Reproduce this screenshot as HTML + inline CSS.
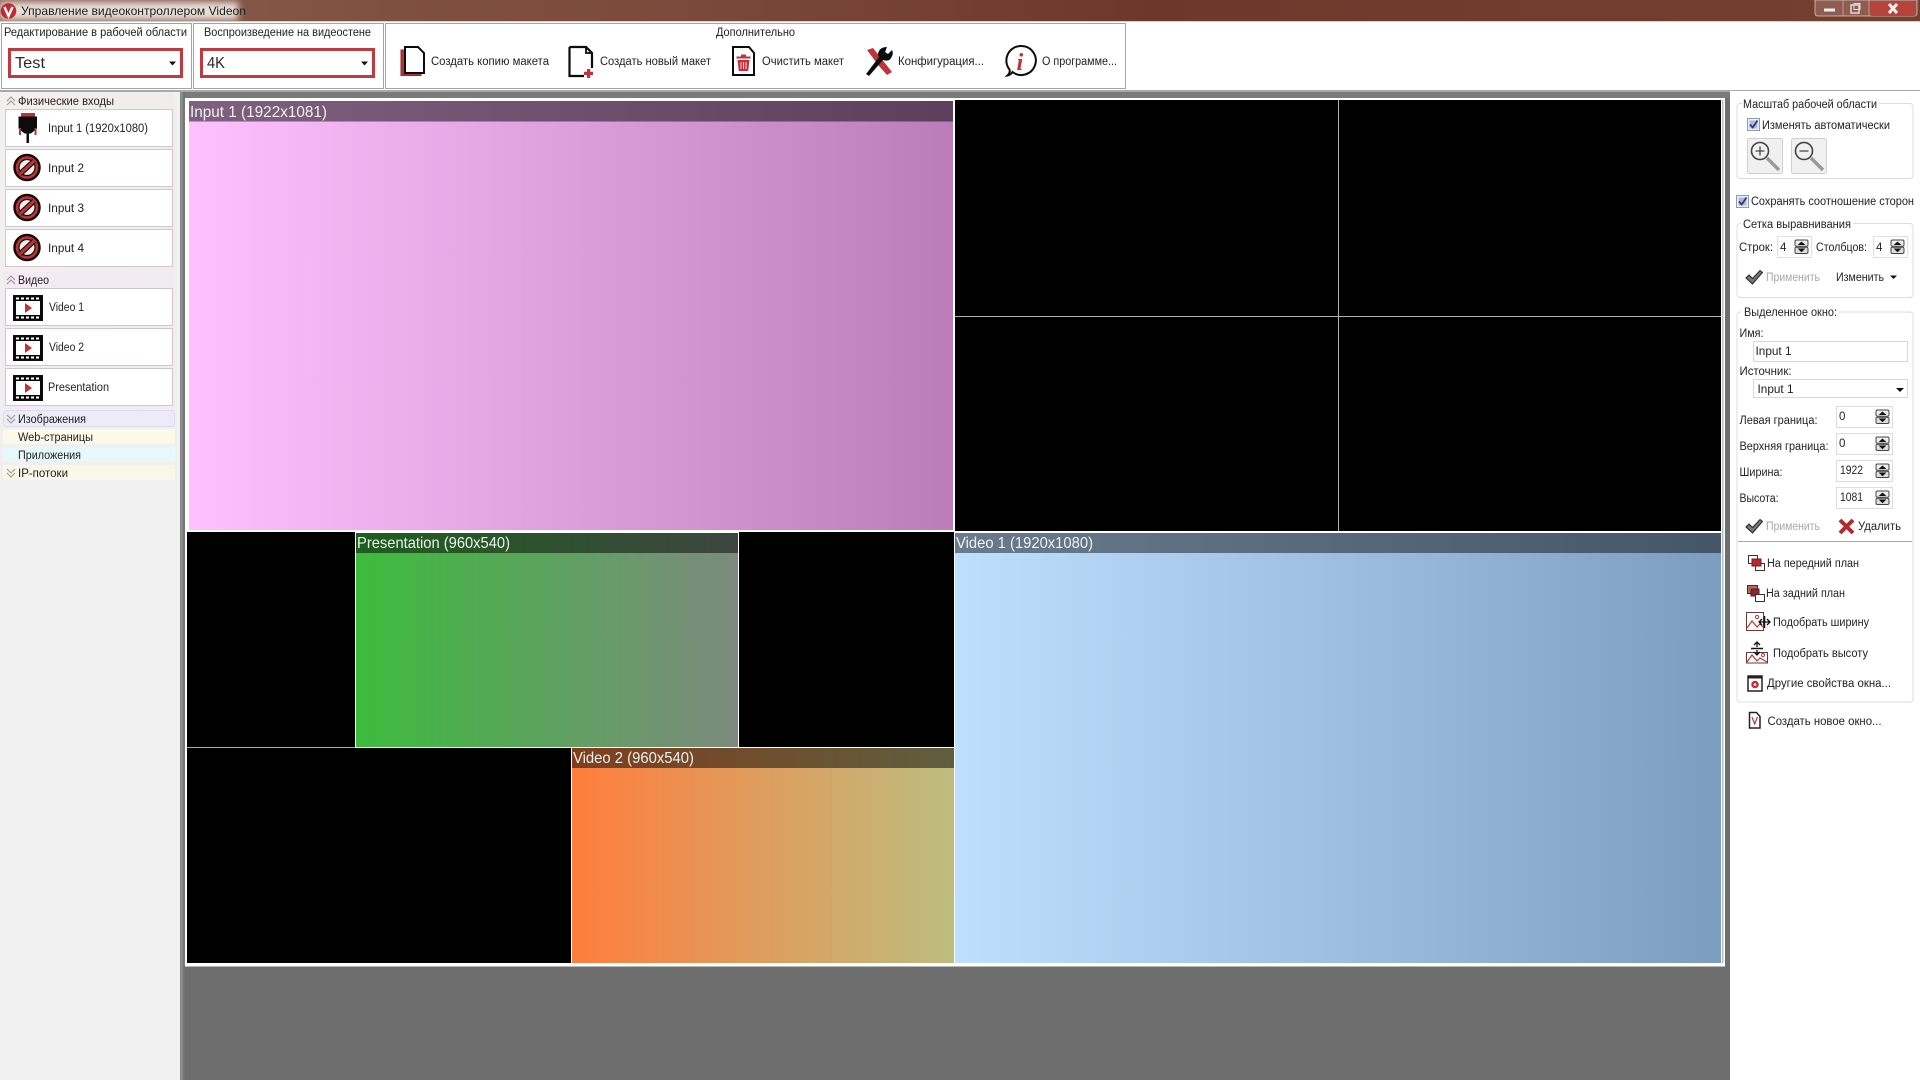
<!DOCTYPE html>
<html><head><meta charset="utf-8"><title>Управление видеоконтроллером Videon</title>
<style>
html,body{margin:0;padding:0;background:#fff;overflow:hidden}
svg{display:block}
text{font-family:"Liberation Sans","DejaVu Sans",sans-serif;font-size:11.5px;fill:#222}
.w{font-size:16px;fill:#eef2ee}
.c{font-size:16px;fill:#2a2a2a}
.g{fill:#a8a8a8}
</style></head><body>
<svg width="1920" height="1080" viewBox="0 0 1920 1080" xmlns="http://www.w3.org/2000/svg">
<defs>
<filter id="bl" x="-20%" y="-100%" width="140%" height="300%"><feGaussianBlur stdDeviation="3.500"/></filter>
<clipPath id="tc"><rect width="1920" height="21"/></clipPath>
<linearGradient id="tb" x1="0" x2="1" y1="0" y2="0"><stop offset="0" stop-color="#8e6256"/><stop offset=".2" stop-color="#80503f"/><stop offset=".35" stop-color="#7b4a3c"/><stop offset=".6" stop-color="#6d382c"/><stop offset="1" stop-color="#76402f"/></linearGradient>
<linearGradient id="gi" x1="0" x2="1" y1="0" y2="0"><stop offset="0" stop-color="#ffc0ff"/><stop offset="1" stop-color="#bb7db9"/></linearGradient>
<linearGradient id="gp" x1="0" x2="1" y1="0" y2="0"><stop offset="0" stop-color="#3dbb3d"/><stop offset="1" stop-color="#7d8a7f"/></linearGradient>
<linearGradient id="gv" x1="0" x2="1" y1="0" y2="0"><stop offset="0" stop-color="#bfdfff"/><stop offset="1" stop-color="#7c9dbe"/></linearGradient>
<linearGradient id="go" x1="0" x2="1" y1="0" y2="0"><stop offset="0" stop-color="#ff7d3d"/><stop offset="1" stop-color="#bdbd7f"/></linearGradient>
<linearGradient id="lp1" x1="0" x2="1" y1="0" y2="0"><stop offset="0" stop-color="#f7eeee"/><stop offset="1" stop-color="#f1ecec"/></linearGradient>
<linearGradient id="lp2" x1="0" x2="1" y1="0" y2="0"><stop offset="0" stop-color="#f6e9f6"/><stop offset="1" stop-color="#f0ecf0"/></linearGradient>
<g id="no"><circle cx="14" cy="14.5" r="12.500" fill="#b5353b" stroke="#1a0a0a" stroke-width="2.500"/><circle cx="14" cy="14.5" r="8" fill="#f4f0f0" stroke="#1a0a0a" stroke-width="1.200"/><path d="M7 21 L21 8" stroke="#1a0a0a" stroke-width="5.500"/><path d="M7 21 L21 8" stroke="#b5353b" stroke-width="3.200"/></g>
<g id="film"><rect width="30" height="26" fill="#0b0b0b"/><rect x="3" y="6" width="24" height="14" fill="#fff"/><path d="M3 2.500h3v2H3zM8 2.500h3v2H8zM13 2.500h3v2h-3zM18 2.500h3v2h-3zM23 2.500h3v2h-3zM3 21.500h3v2H3zM8 21.500h3v2H8zM13 21.500h3v2h-3zM18 21.500h3v2h-3zM23 21.500h3v2h-3z" fill="#fff"/><path d="M12 8 L19 13 L12 18z" fill="#c1323a"/></g>
<g id="spin"><rect x="0" y="0" width="13" height="6.300" rx="1.500" fill="#eee" stroke="#444"/><rect x="0" y="7.200" width="13" height="6.300" rx="1.500" fill="#ddd" stroke="#444"/><path d="M2.600 5 L6.500 1.500 L10.400 5z" fill="#111"/><path d="M2.600 8.500 L6.500 12.200 L10.400 8.500z" fill="#111"/></g>
<g id="chk"><path d="M0 8 L3 5 L6.500 8.500 L14 0.500 L16.500 2.500 L6.500 14z" fill="#777" stroke="#222" stroke-width="1"/></g>
<g id="cu"><path d="M0 5 L4 1 L8 5 M0 9 L4 5 L8 9" fill="none" stroke="#999" stroke-width="1.100"/></g>
<g id="cd"><path d="M0 1 L4 5 L8 1 M0 5 L4 9 L8 5" fill="none" stroke="#999" stroke-width="1.100"/></g>
<g id="ck"><rect x=".5" y=".5" width="12" height="12" fill="#e8eefa" stroke="#999"/><rect x="2.500" y="2.500" width="8" height="8" fill="#a8bde0"/><path d="M3 6.500 L5.700 9.500 L10.500 2.500" fill="none" stroke="#2b3a6a" stroke-width="1.700"/></g>
</defs>

<!-- title bar -->
<rect width="1920" height="21" fill="url(#tb)"/>
<g clip-path="url(#tc)"><rect x="0" y="2" width="238" height="18" fill="#e6ded8" filter="url(#bl)"/></g>
<rect y="21" width="1920" height="1" fill="#d8cfcc"/>
<circle cx="8.500" cy="11" r="7.800" fill="#c6282f"/>
<path d="M4.500 7 L8.500 16 L12.500 7" fill="none" stroke="#fff" stroke-width="2.400"/>
<text x="21" y="15" textLength="225" lengthAdjust="spacingAndGlyphs" style="font-size:12px">Управление видеоконтроллером Videon</text>
<path d="M1815 0 v13 q0 3 3 3 h96 q3 0 3-3 v-13z" fill="#8f5c50" stroke="#e0d8d4" stroke-opacity=".7"/>
<rect x="1870" y="1" width="46" height="15" rx="2" fill="#b8433a"/>
<path d="M1843 0v16M1869 0v16" stroke="#d8c8c4" stroke-opacity=".6"/>
<rect x="1824" y="8.500" width="11" height="3" fill="#eee"/>
<rect x="1851" y="5" width="8" height="8" fill="none" stroke="#ddd" stroke-width="1.500"/><rect x="1854" y="3.500" width="6" height="6" fill="none" stroke="#ddd" stroke-width="1"/>
<path d="M1889 4 L1897 13 M1897 4 L1889 13" stroke="#f2f2f2" stroke-width="3"/>

<!-- toolbar -->
<rect y="22" width="1920" height="68" fill="#fff"/>
<rect x="1.500" y="23.500" width="190" height="65" fill="#fff" stroke="#a3a3a3"/>
<rect x="193.500" y="23.500" width="190" height="65" fill="#fff" stroke="#a3a3a3"/>
<rect x="385.500" y="23.500" width="740" height="65" fill="#fff" stroke="#a3a3a3"/>
<text x="4" y="36" textLength="183" lengthAdjust="spacingAndGlyphs">Редактирование в рабочей области</text>
<text x="204" y="36" textLength="167" lengthAdjust="spacingAndGlyphs">Воспроизведение на видеостене</text>
<text x="716" y="36" textLength="79" lengthAdjust="spacingAndGlyphs">Дополнительно</text>
<rect x="9.500" y="49.500" width="172" height="27" fill="#fff" stroke="#c0393f" stroke-width="3"/>
<text class="c" x="15" y="68" textLength="30" lengthAdjust="spacingAndGlyphs">Test</text>
<path d="M169 61.500h7l-3.500 4z" fill="#111"/>
<rect x="201.500" y="49.500" width="172" height="27" fill="#fff" stroke="#c0393f" stroke-width="3"/>
<text class="c" x="207" y="68" textLength="18" lengthAdjust="spacingAndGlyphs">4K</text>
<path d="M361 61.500h7l-3.500 4z" fill="#111"/>

<!-- toolbar icons -->
<path d="M401 50 h4 v22 h16 v3.500 h-20z" fill="#b5353b" stroke="#8c2a2f"/>
<path d="M405 47 h13 l6 6 v20 h-19z" fill="#fff" stroke="#0c0c0c" stroke-width="2"/>
<text x="431" y="65" textLength="118" lengthAdjust="spacingAndGlyphs">Создать копию макета</text>
<path d="M569.500 47 h16.500 l6 6 v15 M584 76 h-14.500 v-29" fill="#fff" stroke="#0c0c0c" stroke-width="2.200"/>
<path d="M586 46 v7 h6" fill="none" stroke="#0c0c0c" stroke-width="1.800"/>
<path d="M587 69 h3.200 v2.800 h2.800 v3.200 h-2.800 v3 h-3.200 v-3 h-3 v-3.200 h3z" fill="#c1323a"/>
<text x="600" y="65" textLength="111" lengthAdjust="spacingAndGlyphs">Создать новый макет</text>
<path d="M733 47 h16 l5 6 v22 h-21z" fill="#fff" stroke="#0c0c0c" stroke-width="2"/>
<path d="M737.500 60 h12 l-1.300 11 h-9.400z" fill="#c1323a"/><rect x="736.500" y="56.500" width="14" height="2" fill="#c1323a"/><rect x="741" y="54.500" width="5" height="2" fill="#c1323a"/>
<path d="M741 62v7M743.500 62v7M746 62v7" stroke="#fff" stroke-width=".8"/>
<text x="762" y="65" textLength="82" lengthAdjust="spacingAndGlyphs">Очистить макет</text>
<path d="M867 50 L873 48 L892 72 L887 75 L879 66z" fill="#c1323a"/>
<path d="M866 74 L869 76 L883 60 Q889 62 891 58 Q894 54 892 50 L888 54 L885 52 L887 47 Q881 47 879 51 Q877 54 879 57z" fill="#0c0c0c"/>
<text x="898" y="65" textLength="86" lengthAdjust="spacingAndGlyphs">Конфигурация...</text>
<path d="M1021.500 46 a14.500 14.500 0 1 1 -9 26 q-2 3 -5 3.500 q3-3 2-6 a14.500 14.500 0 0 1 12-23.500z" fill="#fff" stroke="#0c0c0c" stroke-width="2"/>
<text x="1016.500" y="70" style="font-family:'Liberation Serif',serif;font-size:24px;font-weight:bold;font-style:italic;fill:#c1323a">i</text>
<text x="1042" y="65" textLength="75" lengthAdjust="spacingAndGlyphs">О программе...</text>

<!-- work area bg -->
<rect x="180" y="90" width="1550" height="990" fill="#6e6e6e"/>
<rect x="0" y="90" width="1730" height="2" fill="#a8a8a8"/>
<rect x="180" y="92" width="1550" height="6" fill="#7a7a7a"/>
<rect x="180" y="92" width="3" height="988" fill="#8c8c8c"/>
<rect x="183" y="92" width="2" height="988" fill="#757575"/>
<rect x="185" y="98" width="1540" height="868.500" fill="#fff"/>
<rect x="187" y="100" width="1534" height="863" fill="#000"/>
<rect x="1722" y="100" width="1.500" height="863" fill="#b4c2be"/>

<!-- Input 1 -->
<rect x="187" y="100" width="768" height="432" fill="#fff"/>
<rect x="189" y="101" width="764" height="429" fill="url(#gi)"/>
<rect x="189" y="101" width="764" height="20.500" fill="#000" fill-opacity=".5"/>
<text class="w" x="190" y="117" textLength="137" lengthAdjust="spacingAndGlyphs">Input 1 (1922x1081)</text>

<!-- quadrants -->
<path d="M1338.500 100V532" stroke="#b0b0b0"/>
<path d="M955 316.500H1721" stroke="#b0b0b0"/>

<!-- lower -->
<rect x="187" y="532" width="768" height="431" fill="#000"/>
<rect x="954" y="532" width="1" height="431" fill="#fff"/>
<rect x="955" y="531" width="767" height="2" fill="#fff"/>
<rect x="187" y="747" width="767" height="1" fill="#aaa"/>

<!-- Presentation -->
<rect x="355" y="532" width="384" height="216" fill="#fff"/>
<rect x="356" y="533" width="382" height="214" fill="url(#gp)"/>
<rect x="356" y="533" width="382" height="20" fill="#000" fill-opacity=".5"/>
<text class="w" x="357" y="548" textLength="153" lengthAdjust="spacingAndGlyphs">Presentation (960x540)</text>

<!-- Video 2 -->
<rect x="571" y="747" width="383" height="216" fill="#fff"/>
<rect x="572" y="748" width="382" height="215" fill="url(#go)"/>
<rect x="572" y="748" width="382" height="20" fill="#000" fill-opacity=".5"/>
<text class="w" x="573" y="763" textLength="121" lengthAdjust="spacingAndGlyphs">Video 2 (960x540)</text>

<!-- Video 1 -->
<rect x="955" y="533" width="766" height="430" fill="url(#gv)"/>
<rect x="955" y="533" width="766" height="20" fill="#000" fill-opacity=".45"/>
<text class="w" x="956" y="548" textLength="137" lengthAdjust="spacingAndGlyphs">Video 1 (1920x1080)</text>

<!-- left panel -->
<rect x="0" y="92" width="180" height="988" fill="#f0f0f0"/>
<rect x="3" y="93" width="172" height="178" rx="3" fill="url(#lp1)"/>
<rect x="3" y="272" width="172" height="137" rx="3" fill="url(#lp2)"/>
<use href="#cu" x="7" y="96"/>
<text x="18" y="105" textLength="96" lengthAdjust="spacingAndGlyphs">Физические входы</text>
<g fill="#fff" stroke="#cdc8cc">
<rect x="5.500" y="109.500" width="167" height="37"/>
<rect x="5.500" y="149.500" width="167" height="37"/>
<rect x="5.500" y="189.500" width="167" height="37"/>
<rect x="5.500" y="229.500" width="167" height="37"/>
<rect x="5.500" y="288.500" width="167" height="37"/>
<rect x="5.500" y="328.500" width="167" height="37"/>
<rect x="5.500" y="368.500" width="167" height="37"/>
</g>
<rect x="21" y="113" width="14" height="3.500" fill="#b5353b"/>
<path d="M18.500 116.500 h18.500 v12 l-6 5 h-6.500 l-6-5z" fill="#0c0c0c"/>
<rect x="26.500" y="133" width="2.500" height="10" fill="#0c0c0c"/>
<rect x="19" y="128" width="2" height="7" fill="#b5353b"/><rect x="34.500" y="128" width="2" height="7" fill="#b5353b"/>
<text x="48" y="132" textLength="100" lengthAdjust="spacingAndGlyphs">Input 1 (1920x1080)</text>
<use href="#no" x="13" y="153"/><text x="48" y="172" textLength="36" lengthAdjust="spacingAndGlyphs">Input 2</text>
<use href="#no" x="13" y="193"/><text x="48" y="212" textLength="36" lengthAdjust="spacingAndGlyphs">Input 3</text>
<use href="#no" x="13" y="233"/><text x="48" y="252" textLength="36" lengthAdjust="spacingAndGlyphs">Input 4</text>
<use href="#cu" x="7" y="275"/>
<text x="18" y="284" textLength="31" lengthAdjust="spacingAndGlyphs">Видео</text>
<use href="#film" x="13" y="295"/><text x="49" y="311" textLength="35" lengthAdjust="spacingAndGlyphs">Video 1</text>
<use href="#film" x="13" y="335"/><text x="49" y="351" textLength="35" lengthAdjust="spacingAndGlyphs">Video 2</text>
<use href="#film" x="13" y="375"/><text x="48" y="391" textLength="61" lengthAdjust="spacingAndGlyphs">Presentation</text>
<rect x="3.500" y="410.500" width="171" height="16" rx="3" fill="#ecebf6" stroke="#dcdcee"/>
<use href="#cd" x="7" y="414"/>
<text x="18" y="423" textLength="68" lengthAdjust="spacingAndGlyphs">Изображения</text>
<rect x="3" y="429" width="172" height="15" rx="2" fill="#fbf9ea"/>
<text x="18" y="441" textLength="75" lengthAdjust="spacingAndGlyphs">Web-страницы</text>
<rect x="3" y="447" width="172" height="15" rx="2" fill="#e6f8fa"/>
<text x="18" y="459" textLength="63" lengthAdjust="spacingAndGlyphs">Приложения</text>
<rect x="3" y="465" width="172" height="15" rx="2" fill="#f8f8e8"/>
<use href="#cd" x="7" y="468"/>
<text x="18" y="477" textLength="50" lengthAdjust="spacingAndGlyphs">IP-потоки</text>

<!-- right panel -->
<rect x="1730" y="90" width="190" height="990" fill="#fff"/>
<rect x="1730" y="90" width="190" height="1" fill="#a8a8a8"/>
<g fill="none" stroke="#dcdcdc">
<rect x="1737" y="103.500" width="176" height="75" rx="3"/>
<rect x="1737" y="223.500" width="176" height="74" rx="3"/>
<rect x="1737" y="312" width="176" height="390" rx="3"/>
</g>
<rect x="1742" y="98" width="137" height="12" fill="#fff"/>
<text x="1743" y="108" textLength="134" lengthAdjust="spacingAndGlyphs">Масштаб рабочей области</text>
<use href="#ck" x="1747" y="118"/>
<text x="1762" y="129" textLength="128" lengthAdjust="spacingAndGlyphs">Изменять автоматически</text>
<rect x="1747.500" y="138.500" width="35" height="35" rx="2" fill="#f0f0f0" stroke="#cfcfcf"/>
<rect x="1791.500" y="138.500" width="35" height="35" rx="2" fill="#f0f0f0" stroke="#cfcfcf"/>
<g fill="none" stroke="#444" stroke-width="1.600"><circle cx="1760" cy="151" r="8.500"/><circle cx="1804" cy="151" r="8.500"/></g>
<path d="M1755.500 151h9M1760 146.500v9M1799.500 151h9" stroke="#444" stroke-width="1.300"/>
<path d="M1767 158 L1779 170M1811 158 L1823 170" stroke="#9a9a9a" stroke-width="3.500"/>
<use href="#ck" x="1736" y="195"/>
<text x="1751" y="205" textLength="163" lengthAdjust="spacingAndGlyphs">Сохранять соотношение сторон</text>

<rect x="1741" y="218" width="112" height="12" fill="#fff"/>
<text x="1743" y="228" textLength="108" lengthAdjust="spacingAndGlyphs">Сетка выравнивания</text>
<text x="1739" y="251" textLength="34" lengthAdjust="spacingAndGlyphs">Строк:</text>
<rect x="1777.500" y="236.500" width="34" height="21" fill="#fff" stroke="#e0e0e0"/>
<text x="1780" y="251">4</text><use href="#spin" x="1795" y="240"/>
<text x="1816" y="251" textLength="51" lengthAdjust="spacingAndGlyphs">Столбцов:</text>
<rect x="1873.500" y="236.500" width="34" height="21" fill="#fff" stroke="#e0e0e0"/>
<text x="1876" y="251">4</text><use href="#spin" x="1891" y="240"/>
<use href="#chk" x="1746" y="270"/>
<text class="g" x="1766" y="281" textLength="54" lengthAdjust="spacingAndGlyphs">Применить</text>
<text x="1836" y="281" textLength="48" lengthAdjust="spacingAndGlyphs">Изменить</text>
<path d="M1890 275.500h7l-3.500 3.500z" fill="#111"/>

<rect x="1741" y="306" width="98" height="12" fill="#fff"/>
<text x="1744" y="316" textLength="93" lengthAdjust="spacingAndGlyphs">Выделенное окно:</text>
<text x="1739.500" y="337" textLength="24" lengthAdjust="spacingAndGlyphs">Имя:</text>
<rect x="1753.500" y="341.500" width="154" height="20" fill="#fff" stroke="#d8d8d8"/>
<text x="1755.500" y="355" textLength="36" lengthAdjust="spacingAndGlyphs">Input 1</text>
<text x="1739.500" y="375" textLength="52" lengthAdjust="spacingAndGlyphs">Источник:</text>
<rect x="1753.500" y="379.500" width="154" height="18" fill="#fff" stroke="#d8d8d8"/>
<text x="1757.500" y="393" textLength="36" lengthAdjust="spacingAndGlyphs">Input 1</text>
<path d="M1896 388h8l-4 4z" fill="#111"/>
<text x="1739.500" y="424" textLength="78" lengthAdjust="spacingAndGlyphs">Левая граница:</text>
<rect x="1836.500" y="406.500" width="56" height="21" fill="#fff" stroke="#dcdcdc"/>
<text x="1839" y="420">0</text><use href="#spin" x="1876" y="410"/>
<text x="1739.500" y="450" textLength="89" lengthAdjust="spacingAndGlyphs">Верхняя граница:</text>
<rect x="1836.500" y="433.500" width="56" height="21" fill="#fff" stroke="#dcdcdc"/>
<text x="1839" y="447">0</text><use href="#spin" x="1876" y="437"/>
<text x="1739.500" y="476" textLength="43" lengthAdjust="spacingAndGlyphs">Ширина:</text>
<rect x="1836.500" y="460.500" width="56" height="21" fill="#fff" stroke="#dcdcdc"/>
<text x="1840" y="474" textLength="23" lengthAdjust="spacingAndGlyphs">1922</text><use href="#spin" x="1876" y="464"/>
<text x="1739.500" y="502" textLength="39" lengthAdjust="spacingAndGlyphs">Высота:</text>
<rect x="1836.500" y="487.500" width="56" height="21" fill="#fff" stroke="#dcdcdc"/>
<text x="1840" y="501" textLength="23" lengthAdjust="spacingAndGlyphs">1081</text><use href="#spin" x="1876" y="491"/>
<use href="#chk" x="1746" y="519"/>
<text class="g" x="1766" y="530" textLength="54" lengthAdjust="spacingAndGlyphs">Применить</text>
<path d="M1840 520 L1853 533 M1853 520 L1840 533" stroke="#b5292f" stroke-width="4"/>
<text x="1858" y="530" textLength="43" lengthAdjust="spacingAndGlyphs">Удалить</text>
<rect x="1738" y="541" width="174" height="1" fill="#a8a8a8"/>

<rect x="1748.500" y="555.500" width="9" height="8" fill="#fff" stroke="#333"/>
<rect x="1755.500" y="563.500" width="9" height="7" fill="#fff" stroke="#333"/>
<rect x="1752" y="559" width="9" height="7" fill="#b5292f" stroke="#7a1a1e"/>
<text x="1767" y="567" textLength="92" lengthAdjust="spacingAndGlyphs">На передний план</text>
<rect x="1747.500" y="585.500" width="10" height="8" fill="#b06a6a" stroke="#333"/>
<rect x="1751" y="589" width="8" height="7" fill="#8a2a30" stroke="#5a1a1e"/>
<rect x="1755.500" y="594.500" width="9" height="7" fill="#fff" stroke="#333"/>
<text x="1766" y="597" textLength="79" lengthAdjust="spacingAndGlyphs">На задний план</text>
<rect x="1746.500" y="612.500" width="17" height="18" fill="#fff" stroke="#6a3a3a"/>
<path d="M1747 628 L1752 621 L1757 627 L1760 624 L1764 628" fill="none" stroke="#c1323a" stroke-width="1.200"/>
<circle cx="1757" cy="617" r="1.600" fill="none" stroke="#c1323a"/>
<path d="M1759 622h11M1762 619l-3 3 3 3M1767 619l3 3-3 3" fill="none" stroke="#111" stroke-width="1.300"/><path d="M1764.500 616v12" stroke="#111" stroke-width="1.500"/>
<text x="1773" y="626" textLength="96" lengthAdjust="spacingAndGlyphs">Подобрать ширину</text>
<rect x="1746.500" y="652.500" width="21" height="10.500" fill="#fff" stroke="#6a3a3a"/>
<path d="M1747 662 L1752 655 L1757 661 L1760 658 L1767 662" fill="none" stroke="#c1323a" stroke-width="1.200"/>
<circle cx="1763" cy="655" r="1.500" fill="none" stroke="#c1323a"/>
<path d="M1757 642v5M1757 650v5M1754 645l3-3 3 3M1754 652l3 3 3-3" fill="none" stroke="#111" stroke-width="1.300"/><path d="M1751 648.500h12" stroke="#111" stroke-width="1.500"/>
<text x="1773" y="657" textLength="95" lengthAdjust="spacingAndGlyphs">Подобрать высоту</text>
<rect x="1748" y="676" width="14" height="15" fill="#fff" stroke="#222" stroke-width="1.500"/><rect x="1748" y="676" width="14" height="2.500" fill="#222"/>
<circle cx="1755" cy="684.500" r="3.800" fill="#c1323a"/><circle cx="1755" cy="684.500" r="1.300" fill="#fff"/>
<text x="1767" y="687" textLength="124" lengthAdjust="spacingAndGlyphs">Другие свойства окна...</text>
<path d="M1749.500 712.500h7l3.500 4v11.500h-10.500z" fill="#fff" stroke="#222" stroke-width="1.500"/>
<path d="M1752 717l2.700 7 2.700-7" fill="none" stroke="#c1323a" stroke-width="1.200"/>
<text x="1767.500" y="725" textLength="114" lengthAdjust="spacingAndGlyphs">Создать новое окно...</text>
</svg>
</body></html>
